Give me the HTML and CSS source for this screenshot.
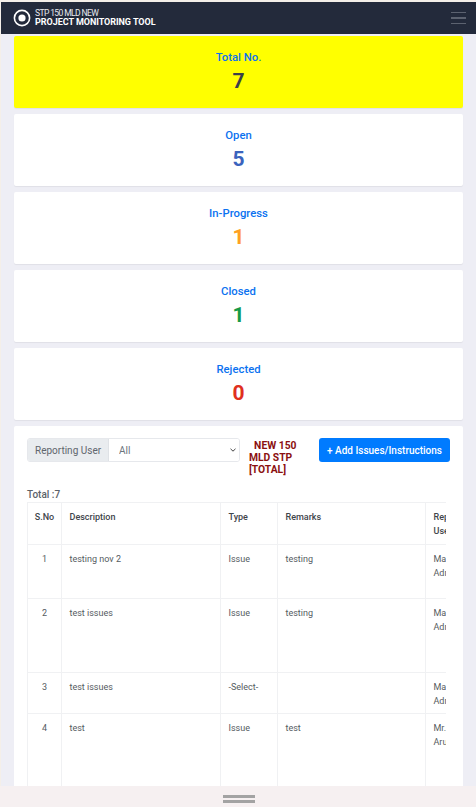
FILE: index.html
```html
<!DOCTYPE html>
<html lang="en">
<head>
<meta charset="utf-8">
<title>Project Monitoring Tool</title>
<link rel="stylesheet" href="styles.css">
</head>
<body>
<div class="app">
  <header class="topbar">
    <div class="brand">
      <svg class="logo" viewBox="0 0 18 18" width="18" height="18"><circle cx="9" cy="9" r="7.6" fill="none" stroke="#fff" stroke-width="1.6"/><circle cx="9" cy="9" r="3.6" fill="#fff"/></svg>
      <div class="brand-text">
        <div class="brand-sub">STP 150 MLD NEW</div>
        <div class="brand-main">PROJECT MONITORING TOOL</div>
      </div>
    </div>
    <div class="burger"><span></span><span></span><span></span></div>
  </header>
  <main class="content">
    <section class="card card-total"><div class="label">Total No.</div><div class="num n-total">7</div></section>
    <section class="card"><div class="label">Open</div><div class="num n-open">5</div></section>
    <section class="card"><div class="label">In-Progress</div><div class="num n-prog">1</div></section>
    <section class="card"><div class="label">Closed</div><div class="num n-closed">1</div></section>
    <section class="card"><div class="label">Rejected</div><div class="num n-rej">0</div></section>
    <section class="panel">
      <div class="filters">
        <div class="input-group">
          <span class="addon">Reporting User</span>
          <select class="select"><option>All</option></select>
        </div>
        <div class="project-name">&nbsp;&nbsp;NEW 150<br>MLD STP<br>[TOTAL]</div>
        <button class="add-btn">+ Add Issues/Instructions</button>
      </div>
      <div class="total">Total :7</div>
      <div class="table-wrap">
        <table>
          <colgroup><col class="c1"><col class="c2"><col class="c3"><col class="c4"><col class="c5"></colgroup>
          <thead><tr class="r-head"><th>S.No</th><th>Description</th><th>Type</th><th>Remarks</th><th>Reporting User</th></tr></thead>
          <tbody>
            <tr class="r1"><td class="ctr">1</td><td>testing nov 2</td><td>Issue</td><td>testing</td><td>Mani Admin</td></tr>
            <tr class="r2"><td class="ctr">2</td><td>test issues</td><td>Issue</td><td>testing</td><td>Mani Admin</td></tr>
            <tr class="r3"><td class="ctr">3</td><td>test issues</td><td>-Select-</td><td></td><td>Mani Admin</td></tr>
            <tr class="r4"><td class="ctr">4</td><td>test</td><td>Issue</td><td>test</td><td>Mr. Arun</td></tr>
          </tbody>
        </table>
      </div>
    </section>
  </main>
  <div class="drawer"><div class="handle"></div></div>
</div>
</body>
</html>
```
FILE: styles.css
```css
* { box-sizing: border-box; }
html, body { margin: 0; padding: 0; height: 100%; overflow: hidden; }
body { background: #f4efe9; font-family: Roboto, "Liberation Sans", sans-serif; color: #495057; }
.app { position: relative; height: 807px; padding: 2px 0 0 1px; overflow: hidden; }
.topbar { height: 32px; background: #232a3b; display: flex; align-items: center; justify-content: space-between; padding: 0 10px 0 12px; }
.brand { display: flex; align-items: center; gap: 4px; }
.logo { display: block; }
.brand-text { display: flex; flex-direction: column; color: #fff; margin-top: -1px; }
.brand-sub { font-size: 8.6px; line-height: 9px; letter-spacing: -0.65px; color: #e6e8ee; }
.brand-main { font-size: 9px; line-height: 9px; font-weight: 700; letter-spacing: -0.04px; }
.burger { width: 15px; display: flex; flex-direction: column; gap: 4px; }
.burger span { display: block; height: 1.5px; background: #5c6270; }
.content { background: #eeeef5; height: 773px; padding: 2px 13px 0 13px; display: flex; flex-direction: column; gap: 6px; }
.card { background: #fff; height: 72px; border-radius: 2px; flex: none; text-align: center; padding-top: 15px; box-shadow: 0 1px 1px rgba(0,0,0,.06); }
.card-total { background: #ffff00; }
.label { color: #0b72f0; font-size: 11.3px; font-weight: 500; line-height: 14px; }
.num { font-size: 21px; font-weight: 700; line-height: 25px; margin-top: 4px; }
.n-total { color: #3b3f4a; }
.n-open { color: #3a63bd; }
.n-prog { color: #ffa022; }
.n-closed { color: #169a48; }
.n-rej { color: #e0301e; }
.panel { background: #fff; flex: none; height: 400px; border-radius: 2px; padding: 12px 13px 0 13px; }
.filters { display: flex; align-items: flex-start; height: 51px; }
.input-group { display: flex; width: 213px; height: 24px; border: 1px solid #e6e8ec; border-radius: 3px; overflow: hidden; flex: none; }
.addon { background: #e9ecef; color: #5f666d; font-size: 10px; line-height: 24px; padding: 0 7px; white-space: nowrap; border-right: 1px solid #dfe2e6; }
.select { flex: 1; min-width: 0; border: 0; color: #6c757d; font: 10px Roboto, sans-serif; padding: 0 10px; outline: 0; appearance: none; background: #fff url("data:image/svg+xml,%3Csvg xmlns='http://www.w3.org/2000/svg' width='6' height='4'%3E%3Cpath d='M.5.8 3 3.2 5.5.8' fill='none' stroke='%23444' stroke-width='1'/%3E%3C/svg%3E") no-repeat right 3px center; }
.project-name { width: 70px; margin-left: 9px; flex: none; color: #8b1010; font-size: 10.3px; font-weight: 700; line-height: 12px; padding-top: 2px; }
.add-btn { margin-left: auto; width: 131px; height: 24px; flex: none; border: 0; border-radius: 3px; background: #007bff; color: #fff; font: 500 10px Roboto, sans-serif; padding: 0; white-space: nowrap; }
.total { font-size: 10px; font-weight: 500; color: #5b6168; line-height: 12px; }
.table-wrap { width: 419px; overflow: hidden; margin-top: 1px; }
table { border-collapse: collapse; table-layout: fixed; width: 442px; font-size: 9px; }
.c1 { width: 34px; } .c2 { width: 159px; } .c3 { width: 57px; } .c4 { width: 148px; } .c5 { width: 44px; }
th, td { border: 1px solid #f0f1f3; text-align: left; vertical-align: top; padding: 7px 7.5px 5px; line-height: 14px; color: #4c5258; }
th { font-weight: 500; color: #3f454b; }
td { color: #555b61; }
.ctr { text-align: center; }
th:first-child { text-align: center; padding-left: 0; padding-right: 0; }
.r-head { height: 42px; } .r1 { height: 54px; } .r2 { height: 74px; } .r3 { height: 41px; } .r4 { height: 90px; }
.drawer { position: absolute; left: 0; right: 0; bottom: 0; height: 21px; background: #f6f0f1; display: flex; justify-content: center; padding-top: 9px; }
.handle { width: 32px; height: 8px; margin-left: 1px; border-top: 3px solid #a3a3a3; border-bottom: 3px solid #a3a3a3; }
```
